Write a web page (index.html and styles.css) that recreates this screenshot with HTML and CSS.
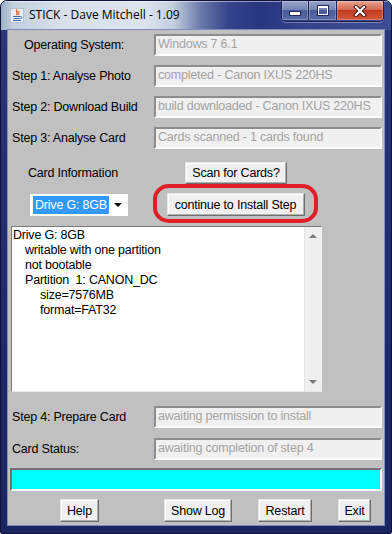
FILE: index.html
```html
<!DOCTYPE html>
<html>
<head>
<meta charset="utf-8">
<title>STICK</title>
<link rel="stylesheet" href="styles.css">
</head>
<body>
<div class="window">
  <div class="titlebar">
    <svg class="app-icon" width="14" height="15" viewBox="0 0 14 15">
      <rect x="0.5" y="0.5" width="13" height="14" fill="#e9edf2" stroke="#b8c2cf"/>
      <path d="M7 1.5 C5 3.5 9 4.5 6.5 7" stroke="#e2561b" stroke-width="1.4" fill="none"/>
      <path d="M9 3 C8 4.5 10 5 8.5 7" stroke="#e2561b" stroke-width="1" fill="none"/>
      <path d="M3 8.5 H10.5 M3.5 10.5 H10 M3 12.5 H11" stroke="#3a6fb5" stroke-width="1.1"/>
      <path d="M10.5 8.5 C12.5 8.5 12.5 10.5 10.3 10.5" stroke="#3a6fb5" stroke-width="0.9" fill="none"/>
    </svg>
    <span class="title">STICK - Dave Mitchell - 1.09</span>
    <div class="caption">
      <div class="cap cap-min"><span class="glyph-min"></span></div>
      <div class="cap cap-max"><span class="glyph-max"></span></div>
      <div class="cap cap-close">
        <svg width="14" height="12" viewBox="0 0 14 12">
          <path d="M3 2 L11 10 M11 2 L3 10" stroke="#3a1a14" stroke-width="4" stroke-linecap="square"/>
          <path d="M3 2 L11 10 M11 2 L3 10" stroke="#ffffff" stroke-width="2.2" stroke-linecap="square"/>
        </svg>
      </div>
    </div>
  </div>

  <div class="client">
    <div class="form">
      <div class="label label-os">Operating System:</div>
      <div class="field">Windows 7 6.1</div>
      <div class="label">Step 1: Analyse Photo</div>
      <div class="field">completed - Canon IXUS 220HS</div>
      <div class="label">Step 2: Download Build</div>
      <div class="field">build downloaded - Canon IXUS 220HS</div>
      <div class="label">Step 3: Analyse Card</div>
      <div class="field">Cards scanned - 1 cards found</div>
    </div>

    <div class="card-head">
      <div class="label card-label">Card Information</div>
      <div class="btn btn-scan">Scan for Cards?</div>
    </div>

    <div class="card-row">
      <div class="combo">
        <span class="combo-sel">Drive G: 8GB</span>
        <span class="combo-arrow"></span>
      </div>
      <div class="redbox">
        <div class="btn btn-continue">continue to Install Step</div>
      </div>
    </div>

    <div class="textarea">
      <div class="ta-text">
        <div class="ln">Drive G: 8GB</div>
        <div class="ln ind1">writable with one partition</div>
        <div class="ln ind1">not bootable</div>
        <div class="ln ind1">Partition  1: CANON_DC</div>
        <div class="ln ind2">size=7576MB</div>
        <div class="ln ind2">format=FAT32</div>
      </div>
      <div class="scroll">
        <span class="arrow-up"></span>
        <span class="arrow-down"></span>
      </div>
    </div>

    <div class="form form-bottom">
      <div class="label">Step 4: Prepare Card</div>
      <div class="field">awaiting permission to install</div>
      <div class="label">Card Status:</div>
      <div class="field">awaiting completion of step 4</div>
    </div>

    <div class="progress"></div>

    <div class="buttons">
      <div class="btn btn-help">Help</div>
      <div class="btn btn-log">Show Log</div>
      <div class="btn btn-restart">Restart</div>
      <div class="btn btn-exit">Exit</div>
    </div>
  </div>
</div>
</body>
</html>
```

FILE: styles.css
```css
html, body {
  margin: 0;
  padding: 0;
}
body {
  width: 392px;
  height: 534px;
  overflow: hidden;
  background: #ffffff;
  font-family: "Liberation Sans", Arial, sans-serif;
  font-size: 12.5px;
  letter-spacing: -0.2px;
  color: #000;
}
.window {
  width: 392px;
  height: 534px;
  box-sizing: border-box;
  border: 1px solid #0d1236;
  border-radius: 7px 7px 2px 2px;
  background: linear-gradient(180deg, #2a3878 0, #1f2a6a 60%, #1b2564 100%);
  display: flex;
  flex-direction: column;
  overflow: hidden;
}
.titlebar {
  height: 29px;
  flex: none;
  display: flex;
  align-items: flex-start;
  padding: 0 7px 0 9px;
  background:
    linear-gradient(90deg, #9fb0c8 0, #c2cfde 12px, #d8e1eb 60px, #dbe3ec 145px, #c4cfde 172px, #6a79ab 200px, #34428a 228px, #283680 260px, #33428a 300px, #3e4d93 390px);
  box-shadow: inset 0 1px 0 rgba(255,255,255,0.5);
}
.app-icon {
  margin-top: 7px;
  flex: none;
}
.title {
  margin-left: 5px;
  margin-top: 6px;
  font-family: "Open Sans", "Noto Sans", sans-serif;
  font-size: 12px;
  letter-spacing: 0;
  line-height: 16px;
  color: #000;
  white-space: nowrap;
}
.caption {
  margin-left: auto;
  display: flex;
  height: 20px;
  border: 1px solid #1a2150;
  border-top: none;
  border-radius: 0 0 5px 5px;
  overflow: hidden;
  box-shadow: 0 1px 0 rgba(255,255,255,0.35);
}
.cap {
  height: 19px;
  display: flex;
  align-items: center;
  justify-content: center;
  box-shadow: inset 0 0 0 1px rgba(255,255,255,0.25);
}
.cap-min {
  width: 26px;
  background: linear-gradient(180deg, #98a6cc 0, #7384b6 45%, #495a98 50%, #5a6ba6 100%);
  border-right: 1px solid #1d2455;
}
.cap-max {
  width: 27px;
  background: linear-gradient(180deg, #98a6cc 0, #7384b6 45%, #495a98 50%, #5a6ba6 100%);
  border-right: 1px solid #1d2455;
}
.cap-close {
  width: 46px;
  background: linear-gradient(180deg, #e7a393 0, #d66a52 45%, #c23b1f 50%, #d4583a 100%);
}
.glyph-min {
  width: 10px;
  height: 3px;
  margin-top: 6px;
  background: #fff;
  border: 1px solid #232a55;
}
.glyph-max {
  width: 8px;
  height: 6px;
  border: 1px solid #fff;
  border-top-width: 2px;
  outline: 1px solid #232a55;
}

.client {
  flex: none;
  width: 376px;
  height: 495px;
  margin: 0 0 0 7px;
  box-sizing: border-box;
  background: #c0c0c0;
  box-shadow: 0 0 0 1px #7f8bb8;
  padding-top: 4px;
  display: flex;
  flex-direction: column;
}
.form {
  display: grid;
  grid-template-columns: 146px 228px;
  grid-auto-rows: 22px;
  row-gap: 9px;
}
.label {
  align-self: center;
  padding-left: 4px;
  white-space: nowrap;
  line-height: 16px;
}
.label-os {
  padding-left: 16px;
}
.field {
  box-sizing: border-box;
  height: 22px;
  background: #f0f0f0;
  border: 2px solid;
  border-color: #8c8c8c #f4f4f4 #ffffff #8c8c8c;
  color: #a3a3a3;
  line-height: 17px;
  padding-left: 2px;
  white-space: nowrap;
  overflow: hidden;
}

.card-head {
  display: flex;
  align-items: center;
  margin-top: 13px;
  height: 22px;
}
.card-label {
  padding-left: 20px;
  width: 177px;
  box-sizing: border-box;
}
.btn {
  box-sizing: border-box;
  height: 23px;
  background: #f0f0f0;
  border: 1px solid;
  border-color: #e6e6e6 #6e6e6e #6e6e6e #e6e6e6;
  box-shadow: inset -1px -1px 0 #b0b0b0, inset 1px 1px 0 #ffffff;
  display: flex;
  align-items: center;
  justify-content: center;
  white-space: nowrap;
  color: #000;
}
.btn-scan {
  width: 102px;
  height: 22px;
}

.card-row {
  display: flex;
  align-items: flex-start;
  height: 39px;
}
.combo {
  margin-left: 22px;
  margin-top: 10px;
  width: 98px;
  height: 22px;
  background: #ffffff;
  display: flex;
  align-items: center;
  white-space: nowrap;
}
.combo-sel {
  margin-left: 3px;
  background: #3399ff;
  color: #fff;
  padding: 1px 2px;
  line-height: 16px;
}
.combo-arrow {
  margin-left: auto;
  margin-right: 6px;
  width: 0;
  height: 0;
  border-left: 4px solid transparent;
  border-right: 4px solid transparent;
  border-top: 4px solid #000;
}
.redbox {
  margin-left: 25px;
  width: 165px;
  height: 39px;
  box-sizing: border-box;
  border: 4px solid #e11d27;
  border-radius: 16px / 15px;
  display: flex;
  justify-content: center;
  padding-top: 5px;
}
.btn-continue {
  width: 138px;
}

.textarea {
  margin-top: 3px;
  margin-left: 3px;
  width: 311px;
  height: 166px;
  box-sizing: border-box;
  background: #ffffff;
  border: 1px solid;
  border-color: #7a7a7a #f2f2f2 #e8e8e8 #7a7a7a;
  display: flex;
}
.ta-text {
  flex: 1;
  padding: 1px 0 0 1px;
  line-height: 15px;
}
.ln {
  white-space: pre;
}
.ind1 {
  padding-left: 12px;
}
.ind2 {
  padding-left: 27px;
}
.scroll {
  width: 17px;
  background: #efefef;
  border-left: 1px solid #e4e4e4;
  display: flex;
  flex-direction: column;
  justify-content: space-between;
  align-items: center;
  padding: 7px 0 7px;
  box-sizing: border-box;
}
.arrow-up {
  width: 0;
  height: 0;
  border-left: 4px solid transparent;
  border-right: 4px solid transparent;
  border-bottom: 4px solid #7a7a7a;
}
.arrow-down {
  width: 0;
  height: 0;
  border-left: 4px solid transparent;
  border-right: 4px solid transparent;
  border-top: 4px solid #7a7a7a;
}

.form-bottom {
  margin-top: 14px;
  row-gap: 10px;
}

.progress {
  margin-top: 8px;
  margin-left: 2px;
  width: 372px;
  height: 23px;
  box-sizing: border-box;
  background: #00ffff;
  border: 2px solid;
  border-color: #707070 #ffffff #ffffff #707070;
}

.buttons {
  margin-top: 8px;
  display: flex;
  height: 23px;
}
.btn-help {
  margin-left: 52px;
  width: 39px;
}
.btn-log {
  margin-left: 65px;
  width: 68px;
}
.btn-restart {
  margin-left: 26px;
  width: 54px;
}
.btn-exit {
  margin-left: 26px;
  width: 33px;
}
```
